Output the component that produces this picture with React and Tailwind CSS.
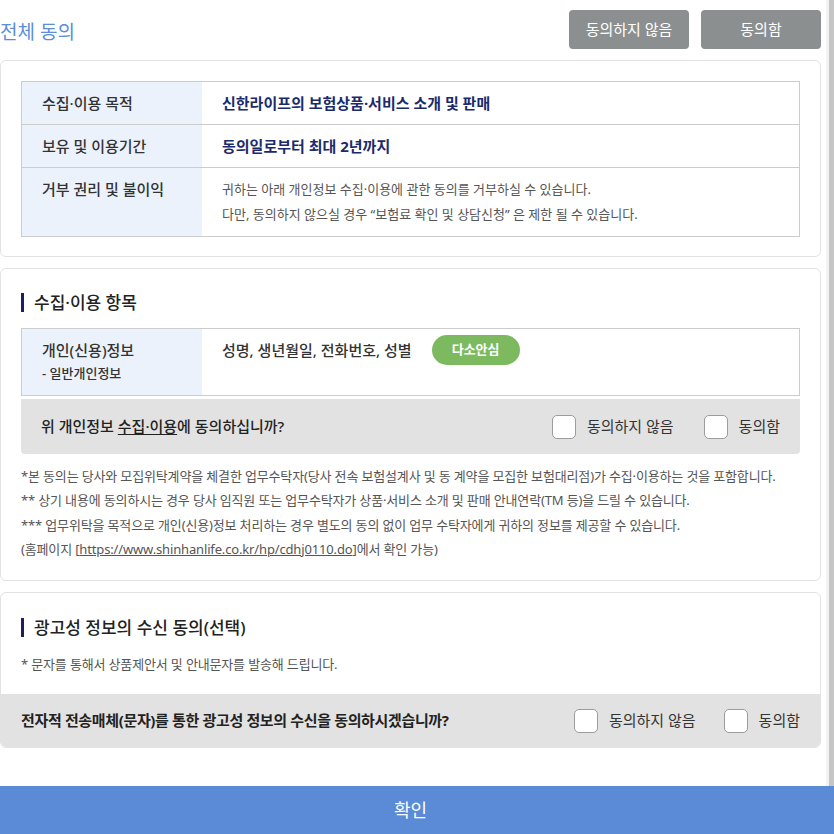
import React from 'react';

const font = "font-['Noto_Sans','Noto_Sans_CJK_KR',sans-serif]";

const Check = ({ label }) => (
  <label className="flex items-center gap-[11px] cursor-pointer">
    <span className="w-[24px] h-[24px] rounded-[5px] bg-white border border-[#9c9c9c]" />
    <span className="text-[15px] text-[#333]">{label}</span>
  </label>
);

const Heading = ({ children }) => (
  <div className="flex items-center h-[20px] gap-[10px]">
    <span className="w-[3px] h-[19px] bg-[#1c1f5c]" />
    <h3 className="text-[17px] font-medium text-[#222] leading-none">{children}</h3>
  </div>
);

const Row = ({ label, children, className = '' }) => (
  <div className={`grid grid-cols-[180px_1fr] ${className}`}>
    <div className="bg-[#ebf2fb] pl-[20px] text-[15px] font-medium text-[#333]">{label}</div>
    <div className="pl-[20px]">{children}</div>
  </div>
);

export default function App() {
  return (
    <div className={`w-[834px] h-[834px] flex flex-col bg-white overflow-hidden ${font}`}>
      <div className="flex flex-1 min-h-0">
        <div className="w-[821px] flex flex-col">
          {/* top bar */}
          <div className="h-[60px] flex items-center justify-between">
            <h2 className="text-[19px] text-[#5b8ddb] mt-[5px]">전체 동의</h2>
            <div className="flex gap-[12px] -mt-[1px]">
              <button className="w-[120px] h-[39px] rounded-[4px] bg-[#8c8f8f] text-white text-[15px]">동의하지 않음</button>
              <button className="w-[120px] h-[39px] rounded-[4px] bg-[#8c8f8f] text-white text-[15px]">동의함</button>
            </div>
          </div>

          {/* purpose table */}
          <div className="border border-[#e2e2e2] rounded-[6px] px-[20px] pt-[20px] pb-[19px]">
            <div className="border border-[#cccccc]">
              <Row label={<div className="h-full flex items-center">수집·이용 목적</div>} className="h-[42px]">
                <div className="h-full flex items-center text-[15px] font-bold text-[#1b2a6b]">신한라이프의 보험상품·서비스 소개 및 판매</div>
              </Row>
              <Row label={<div className="h-full flex items-center">보유 및 이용기간</div>} className="h-[43px] border-t border-[#cccccc]">
                <div className="h-full flex items-center text-[15px] font-bold text-[#1b2a6b]">동의일로부터 최대 2년까지</div>
              </Row>
              <Row label={<div className="pt-[10px]">거부 권리 및 불이익</div>} className="h-[69px] border-t border-[#cccccc]">
                <div className="pt-[9px] text-[13px] leading-[25px] text-[#555]">
                  <p>귀하는 아래 개인정보 수집·이용에 관한 동의를 거부하실 수 있습니다.</p>
                  <p>다만, 동의하지 않으실 경우 “보험료 확인 및 상담신청” 은 제한 될 수 있습니다.</p>
                </div>
              </Row>
            </div>
          </div>

          {/* collected items */}
          <div className="mt-[11px] border border-[#e2e2e2] rounded-[6px] px-[20px] pt-[23px] pb-[19px]">
            <Heading>수집·이용 항목</Heading>
            <div className="mt-[16px] border border-[#cccccc]">
              <Row
                label={
                  <div className="pt-[10px]">
                    <p className="leading-[22px]">개인(신용)정보</p>
                    <p className="text-[13px] leading-[24px]">- 일반개인정보</p>
                  </div>
                }
                className="h-[66px]"
              >
                <div className="pt-[6px] flex items-center gap-[20px]">
                  <span className="text-[15px] font-medium text-[#333]">성명, 생년월일, 전화번호, 성별</span>
                  <span className="w-[88px] h-[30px] rounded-full bg-[#7dba5f] text-white text-[13px] font-bold flex items-center justify-center">다소안심</span>
                </div>
              </Row>
            </div>
            <div className="mt-[3px] h-[55px] bg-[#e2e2e2] rounded-b-[4px] flex items-center justify-between pl-[20px] pr-[20px]">
              <p className="text-[15px] font-medium text-[#222]">
                위 개인정보 <span className="underline underline-offset-2">수집·이용</span>에 동의하십니까?
              </p>
              <div className="flex items-center gap-[30px]">
                <Check label="동의하지 않음" />
                <Check label="동의함" />
              </div>
            </div>
            <div className="mt-[10px] text-[13px] leading-[24.3px] text-[#555] tracking-[-0.15px] whitespace-nowrap">
              <p>*본 동의는 당사와 모집위탁계약을 체결한 업무수탁자(당사 전속 보험설계사 및 동 계약을 모집한 보험대리점)가 수집·이용하는 것을 포함합니다.</p>
              <p>** 상기 내용에 동의하시는 경우 당사 임직원 또는 업무수탁자가 상품·서비스 소개 및 판매 안내연락(TM 등)을 드릴 수 있습니다.</p>
              <p>*** 업무위탁을 목적으로 개인(신용)정보 처리하는 경우 별도의 동의 없이 업무 수탁자에게 귀하의 정보를 제공할 수 있습니다.</p>
              <p>
                (홈페이지 [<a className="underline">https://www.shinhanlife.co.kr/hp/cdhj0110.do</a>]에서 확인 가능)
              </p>
            </div>
          </div>

          {/* marketing */}
          <div className="mt-[11px] border border-[#e2e2e2] rounded-[6px] overflow-hidden">
            <div className="px-[20px] pt-[24px]">
              <Heading>광고성 정보의 수신 동의(선택)</Heading>
              <p className="mt-[17px] text-[13px] leading-[20px] text-[#555] tracking-[-0.15px]">* 문자를 통해서 상품제안서 및 안내문자를 발송해 드립니다.</p>
            </div>
            <div className="mt-[20px] h-[53px] bg-[#e2e2e2] flex items-center justify-between pl-[20px] pr-[20px]">
              <p className="text-[15px] font-bold text-[#222] tracking-[-0.35px]">전자적 전송매체(문자)를 통한 광고성 정보의 수신을 동의하시겠습니까?</p>
              <div className="flex items-center gap-[28px]">
                <Check label="동의하지 않음" />
                <Check label="동의함" />
              </div>
            </div>
          </div>
        </div>
        <div className="w-[5px]" />
        <div className="w-[3px] bg-[#f3f3f3]" />
        <div className="w-[5px] bg-[#c6c6c6]" />
      </div>
      <button className="h-[48px] w-full pr-[13px] bg-[#5b8bd6] text-white text-[18px]">확인</button>
    </div>
  );
}
